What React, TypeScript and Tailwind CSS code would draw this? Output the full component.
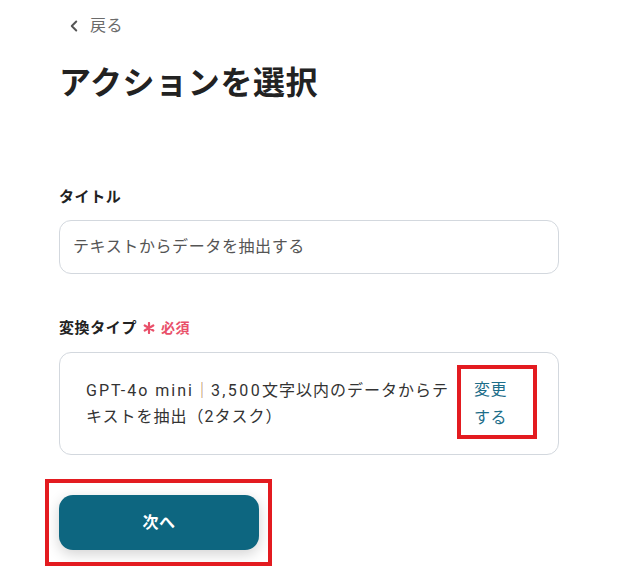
import { ChevronLeft } from "lucide-react";

const font = { fontFamily: 'Roboto, "Noto Sans CJK JP", sans-serif' };

export default function App() {
  return (
    <div className="min-h-[570px] w-[628px] bg-white tracking-[0.6px]" style={font}>
      <div className="ml-[59px] w-[500px]">
        <button className="mt-[16px] flex h-[20px] items-center gap-[7px] pl-[6px] text-[16px] leading-[20px] text-[#6b6b6b]">
          <ChevronLeft size={18} strokeWidth={2.6} className="text-[#555]" />
          <span>戻る</span>
        </button>

        <h1 className="mt-[27px] text-[32px] font-bold leading-[40px] text-[#222]">アクションを選択</h1>

        <Label className="mt-[83px]">タイトル</Label>
        <div className="mt-[12px] flex h-[54px] items-center rounded-[12px] border border-[#d3d8de] px-[13px] text-[16px] text-[#555]">
          テキストからデータを抽出する
        </div>

        <Label className="mt-[43px]">
          変換タイプ
          <span className="ml-[6px] inline-flex items-center gap-[6px] text-[14px] font-bold text-[#e9506a]">
            <svg width="12" height="12" viewBox="0 0 12 12" stroke="currentColor" strokeWidth="2.2" strokeLinecap="round">
              <path d="M6 1v10M1.7 3.5l8.6 5M1.7 8.5l8.6-5" />
            </svg>
            必須
          </span>
        </Label>
        <div className="relative mt-[13px] flex h-[103px] items-center rounded-[12px] border border-[#d3d8de] pl-[26px] text-[16px] leading-[26px] text-[#333]">
          <p className="w-[372px] shrink-0 tracking-[1px]">
            <span className="tracking-[2px]">GPT-4o mini</span>
            <span className="text-[#b07a52]">｜</span>
            <span className="tracking-[2.4px]">3,500</span>文字以内のデータからテキストを抽出（2タスク）
          </p>
          <a className="ml-[16px] w-[36px] leading-[28px] text-[#1d6e8a]">変更する</a>
          <div className="absolute left-[397px] top-[12px] h-[74px] w-[80px] border-[4px] border-[#e31b20]" />
        </div>

        <div className="relative mt-[40px] w-[200px]">
          <button className="flex h-[55px] w-[200px] items-center justify-center rounded-[14px] bg-[#0d6680] text-[16px] font-bold text-white shadow-[0_4px_14px_rgba(0,0,0,0.18)]">
            次へ
          </button>
          <div className="absolute left-[-14px] top-[-16px] h-[87px] w-[227px] border-[4px] border-[#e31b20]" />
        </div>
      </div>
    </div>
  );
}

function Label({ children, className }: { children: React.ReactNode; className?: string }) {
  return (
    <div className={`flex items-center text-[15px] font-bold leading-[22px] text-[#222] ${className ?? ""}`}>{children}</div>
  );
}
